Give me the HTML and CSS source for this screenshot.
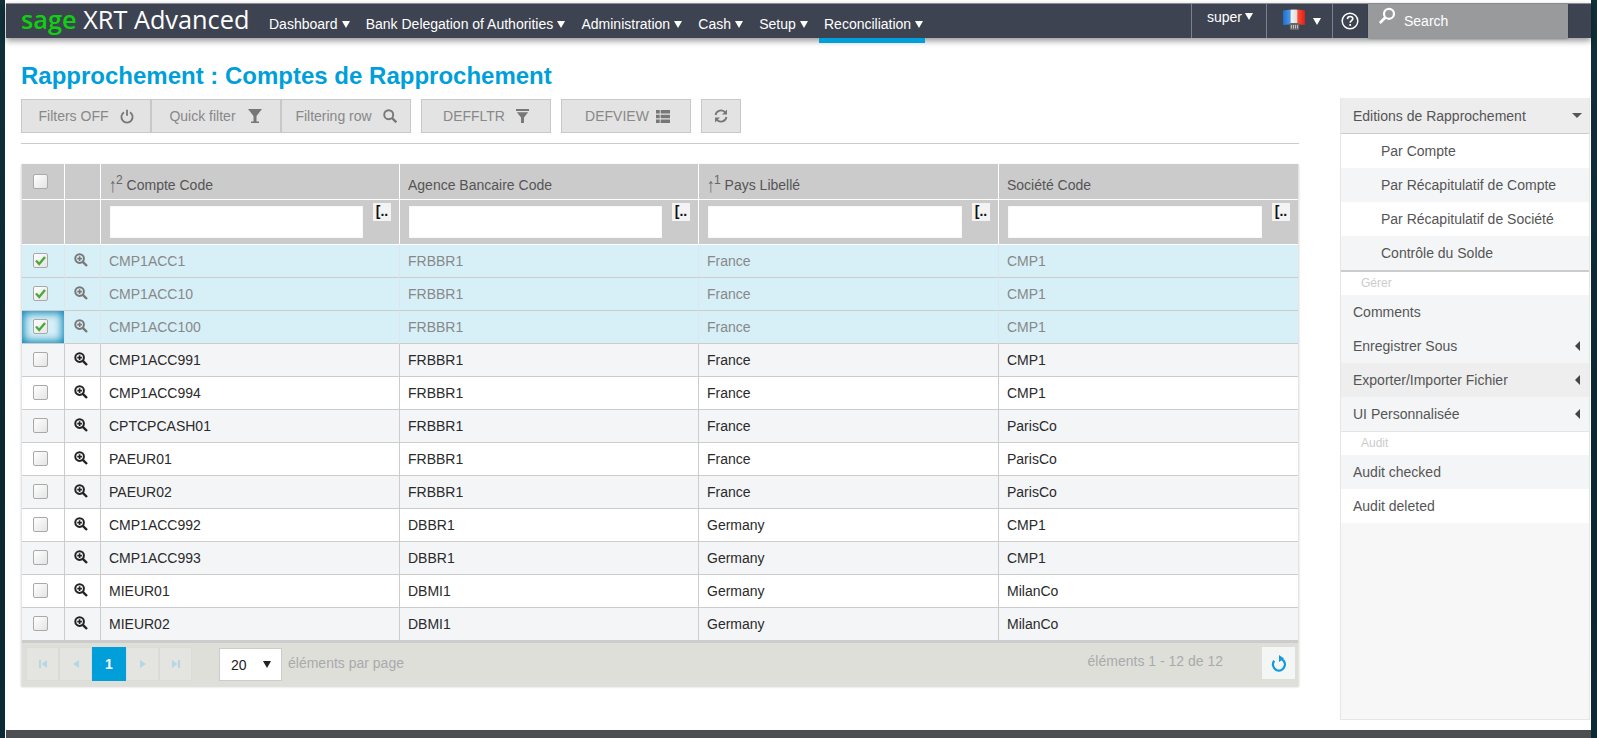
FILE: index.html
```html
<!DOCTYPE html>
<html lang="fr">
<head>
<meta charset="utf-8">
<title>Rapprochement : Comptes de Rapprochement</title>
<link rel="stylesheet" href="styles.css">
</head>
<body>
<svg class="defs" width="0" height="0" aria-hidden="true">
  <symbol id="i-zoom" viewBox="0 0 14 14"><circle cx="5.6" cy="5.6" r="4.3" fill="none" stroke="currentColor" stroke-width="2"/><path d="M8.8 8.8 13 13" stroke="currentColor" stroke-width="2.4" fill="none"/><path d="M3.3 5.6h4.6M5.6 3.3v4.6" stroke="currentColor" stroke-width="1.6"/></symbol>
  <symbol id="i-check" viewBox="0 0 15 15"><path d="M3 7.5 6.2 11 12 4" fill="none" stroke="#4aa83c" stroke-width="2.4"/></symbol>
  <symbol id="i-filter" viewBox="0 0 16 16"><path d="M1 1h14L9.5 8v5.5h2.5V15H4v-1.5h2.5V8z" fill="currentColor"/></symbol>
  <symbol id="i-first" viewBox="0 0 10 10"><path d="M1 1h2v8H1zM9 1v8L3.5 5z" fill="currentColor"/></symbol>
  <symbol id="i-prev" viewBox="0 0 10 10"><path d="M8 1v8L2 5z" fill="currentColor"/></symbol>
  <symbol id="i-next" viewBox="0 0 10 10"><path d="M2 1v8l6-4z" fill="currentColor"/></symbol>
  <symbol id="i-last" viewBox="0 0 10 10"><path d="M1 1v8l5.500-4zM7 1h2v8H7z" fill="currentColor"/></symbol>
</svg>
<div class="app">
  <header class="navbar">
    <div class="brand"><span class="brand-sage">sage</span> XRT Advanced</div>
    <nav class="menu">
      <a class="menu-item">Dashboard<i class="caret"></i></a>
      <a class="menu-item">Bank Delegation of Authorities<i class="caret"></i></a>
      <a class="menu-item">Administration<i class="caret"></i></a>
      <a class="menu-item">Cash<i class="caret"></i></a>
      <a class="menu-item">Setup<i class="caret"></i></a>
      <a class="menu-item active">Reconciliation<i class="caret"></i></a>
    </nav>
    <div class="nav-right">
      <div class="nav-cell user">super<i class="caret"></i></div>
      <div class="nav-cell lang">
        <svg class="flag" width="25" height="26" viewBox="0 0 24 26" preserveAspectRatio="none"><defs><linearGradient id="fl" x1="0" x2="1" y1="0" y2="0"><stop offset="0" stop-color="#1f6fd0"/><stop offset=".33" stop-color="#4b97e8"/><stop offset=".36" stop-color="#f4f4f4"/><stop offset=".64" stop-color="#dcdcdc"/><stop offset=".67" stop-color="#ff4a30"/><stop offset="1" stop-color="#e0201a"/></linearGradient></defs><path d="M1 2.500 Q12 .5 22 2.500V17Q12 15.500 1 17z" fill="url(#fl)"/><rect x="7.500" y="15" width="9" height="7" rx="1" fill="#666"/><path d="M9 17v3.500M11 17v3.500M13 17v3.500M15 17v3.500" stroke="#ddd" stroke-width=".8"/></svg>
        <i class="caret"></i>
      </div>
      <div class="nav-cell help">
        <svg width="18" height="18" viewBox="0 0 18 18"><circle cx="9" cy="9" r="7.800" fill="none" stroke="#fff" stroke-width="1.500"/><path d="M6.400 7.100C6.500 5.300 7.700 4.500 9.100 4.500 10.700 4.500 11.800 5.500 11.800 6.800 11.800 8.700 9.200 8.800 9.200 10.800" fill="none" stroke="#fff" stroke-width="1.600"/><rect x="8.300" y="12" width="1.800" height="1.900" fill="#fff"/></svg>
      </div>
      <div class="search">
        <svg width="18" height="18" viewBox="0 0 18 18"><circle cx="11" cy="6.800" r="5" fill="none" stroke="#fff" stroke-width="2.200"/><path d="M7.300 10.500 1.800 16" stroke="#fff" stroke-width="2.600"/></svg>
        <span>Search</span>
      </div>
    </div>
  </header>
  <div class="main">
    <section class="content">
      <h1 class="title">Rapprochement : Comptes de Rapprochement</h1>
      <div class="toolbar">
        <div class="btn-group">
          <button class="btn wide">Filters OFF
            <svg width="14" height="15" viewBox="0 0 14 15"><path d="M4 3.200a5.600 5.600 0 1 0 6 0" fill="none" stroke="currentColor" stroke-width="1.800"/><path d="M7 .8v6" stroke="currentColor" stroke-width="1.800"/></svg>
          </button>
          <button class="btn wide">Quick filter <svg width="16" height="16"><use href="#i-filter"/></svg></button>
          <button class="btn wide">Filtering row
            <svg width="14" height="14" viewBox="0 0 14 14"><circle cx="5.700" cy="5.700" r="4.500" fill="none" stroke="currentColor" stroke-width="1.900"/><path d="M9 9l4.300 4.300" stroke="currentColor" stroke-width="2.400"/></svg>
          </button>
        </div>
        <button class="btn wide">DEFFLTR <svg width="13" height="15" viewBox="0 0 16 16" preserveAspectRatio="none"><path d="M0 0h16v2H0zM1 3.500h14L9.800 9v6H6.200V9z" fill="currentColor"/></svg></button>
        <button class="btn wide tight">DEFVIEW
          <svg width="14" height="13" viewBox="0 0 15 13" preserveAspectRatio="none"><path d="M0 0h4v3.500H0zM5 0h10v3.500H5zM0 4.700h4v3.500H0zM5 4.700h10v3.500H5zM0 9.400h4V13H0zM5 9.400h10V13H5z" fill="currentColor"/></svg>
        </button>
        <button class="btn narrow" aria-label="Refresh">
          <svg width="14" height="14" viewBox="0 0 14 14"><path d="M1.500 6A5.600 5.600 0 0 1 11.400 3.500M12.500 8A5.600 5.600 0 0 1 2.600 10.500" fill="none" stroke="currentColor" stroke-width="1.800"/><path d="M13 .5v5H8zM1 13.500v-5h5z" fill="currentColor"/></svg>
        </button>
      </div>
      <hr class="rule">
      <div class="grid">
        <table class="grid-table">
          <colgroup><col class="c-check"><col class="c-view"><col class="c-a"><col class="c-a"><col class="c-b"><col></colgroup>
          <thead>
            <tr class="head-row">
              <th class="center check"><span class="cb"></span></th>
              <th></th>
              <th><span class="sort"><span class="arrow">↑</span><sup>2</sup></span> Compte Code</th>
              <th>Agence Bancaire Code</th>
              <th><span class="sort"><span class="arrow">↑</span><sup>1</sup></span> Pays Libellé</th>
              <th>Société Code</th>
            </tr>
            <tr class="filter-row">
              <th></th>
              <th></th>
              <th><div class="filter"><input class="filter-input" type="text"><span class="filter-btn">[..</span></div></th>
              <th><div class="filter"><input class="filter-input" type="text"><span class="filter-btn">[..</span></div></th>
              <th><div class="filter"><input class="filter-input" type="text"><span class="filter-btn">[..</span></div></th>
              <th><div class="filter"><input class="filter-input" type="text"><span class="filter-btn">[..</span></div></th>
            </tr>
          </thead>
          <tbody>
            <tr class="sel"><td class="center check"><span class="cb"><svg width="15" height="15"><use href="#i-check"/></svg></span></td><td class="center view"><svg class="zoom" width="14" height="14"><use href="#i-zoom"/></svg></td><td>CMP1ACC1</td><td>FRBBR1</td><td>France</td><td>CMP1</td></tr>
            <tr class="sel"><td class="center check"><span class="cb"><svg width="15" height="15"><use href="#i-check"/></svg></span></td><td class="center view"><svg class="zoom" width="14" height="14"><use href="#i-zoom"/></svg></td><td>CMP1ACC10</td><td>FRBBR1</td><td>France</td><td>CMP1</td></tr>
            <tr class="sel"><td class="center check focus"><span class="cb"><svg width="15" height="15"><use href="#i-check"/></svg></span></td><td class="center view"><svg class="zoom" width="14" height="14"><use href="#i-zoom"/></svg></td><td>CMP1ACC100</td><td>FRBBR1</td><td>France</td><td>CMP1</td></tr>
            <tr class="alt"><td class="center check"><span class="cb"></span></td><td class="center view"><svg class="zoom" width="14" height="14"><use href="#i-zoom"/></svg></td><td>CMP1ACC991</td><td>FRBBR1</td><td>France</td><td>CMP1</td></tr>
            <tr><td class="center check"><span class="cb"></span></td><td class="center view"><svg class="zoom" width="14" height="14"><use href="#i-zoom"/></svg></td><td>CMP1ACC994</td><td>FRBBR1</td><td>France</td><td>CMP1</td></tr>
            <tr class="alt"><td class="center check"><span class="cb"></span></td><td class="center view"><svg class="zoom" width="14" height="14"><use href="#i-zoom"/></svg></td><td>CPTCPCASH01</td><td>FRBBR1</td><td>France</td><td>ParisCo</td></tr>
            <tr><td class="center check"><span class="cb"></span></td><td class="center view"><svg class="zoom" width="14" height="14"><use href="#i-zoom"/></svg></td><td>PAEUR01</td><td>FRBBR1</td><td>France</td><td>ParisCo</td></tr>
            <tr class="alt"><td class="center check"><span class="cb"></span></td><td class="center view"><svg class="zoom" width="14" height="14"><use href="#i-zoom"/></svg></td><td>PAEUR02</td><td>FRBBR1</td><td>France</td><td>ParisCo</td></tr>
            <tr><td class="center check"><span class="cb"></span></td><td class="center view"><svg class="zoom" width="14" height="14"><use href="#i-zoom"/></svg></td><td>CMP1ACC992</td><td>DBBR1</td><td>Germany</td><td>CMP1</td></tr>
            <tr class="alt"><td class="center check"><span class="cb"></span></td><td class="center view"><svg class="zoom" width="14" height="14"><use href="#i-zoom"/></svg></td><td>CMP1ACC993</td><td>DBBR1</td><td>Germany</td><td>CMP1</td></tr>
            <tr><td class="center check"><span class="cb"></span></td><td class="center view"><svg class="zoom" width="14" height="14"><use href="#i-zoom"/></svg></td><td>MIEUR01</td><td>DBMI1</td><td>Germany</td><td>MilanCo</td></tr>
            <tr class="alt"><td class="center check"><span class="cb"></span></td><td class="center view"><svg class="zoom" width="14" height="14"><use href="#i-zoom"/></svg></td><td>MIEUR02</td><td>DBMI1</td><td>Germany</td><td>MilanCo</td></tr>
          </tbody>
        </table>
        <div class="pager">
          <div class="pages">
            <span class="page"><svg width="10" height="10"><use href="#i-first"/></svg></span>
            <span class="page"><svg width="10" height="10"><use href="#i-prev"/></svg></span>
            <span class="page current">1</span>
            <span class="page"><svg width="10" height="10"><use href="#i-next"/></svg></span>
            <span class="page"><svg width="10" height="10"><use href="#i-last"/></svg></span>
          </div>
          <div class="size">20<i class="caret dark"></i></div>
          <span class="muted">éléments par page</span>
          <span class="muted info">éléments 1 - 12 de 12</span>
          <span class="reload">
            <svg width="16" height="18" viewBox="0 0 16 18"><path d="M8 4.500A6 6 0 1 1 3.200 6.800" fill="none" stroke="#0f9bdc" stroke-width="2.200"/><path d="M8 1v7l5-3.500z" fill="#0f9bdc"/></svg>
          </span>
        </div>
      </div>
    </section>
    <aside class="side">
      <div class="side-head">Editions de Rapprochement<i class="caret gray"></i></div>
      <div class="side-sub">
        <div class="side-item sub">Par Compte</div>
        <div class="side-item sub alt">Par Récapitulatif de Compte</div>
        <div class="side-item sub">Par Récapitulatif de Société</div>
        <div class="side-item sub alt">Contrôle du Solde</div>
      </div>
      <div class="side-label">Gérer</div>
      <div class="side-item alt">Comments</div>
      <div class="side-item alt">Enregistrer Sous<i class="left"></i></div>
      <div class="side-item hover">Exporter/Importer Fichier<i class="left"></i></div>
      <div class="side-item alt">UI Personnalisée<i class="left"></i></div>
      <div class="side-label ruled">Audit</div>
      <div class="side-item alt">Audit checked</div>
      <div class="side-item">Audit deleted</div>
    </aside>
  </div>
  <footer class="footer"></footer>
</div>
</body>
</html>
```
FILE: styles.css
```css
* { box-sizing: border-box; }
html, body { margin: 0; height: 100%; }
body {
  background: linear-gradient(180deg, #10303a, #0b2730 60%, #0c2a33);
  font-family: "Liberation Sans", Arial, sans-serif;
  font-size: 14px;
  color: #333;
  overflow: hidden;
}
.defs { position: absolute; }
.app {
  margin: 0 6px 0 5px;
  width: 1586px;
  height: 738px;
  background: #fff;
  border-left: 1px solid #fff;
  border-top: 3px solid #fff;
  display: flex;
  flex-direction: column;
}
.navbar {
  height: 35px;
  flex: none;
  background: #3d4351;
  border-top: 1px solid #8a8d94;
  color: #fff;
  display: flex;
  box-shadow: 0 3px 6px rgba(0,0,0,.4);
  position: relative;
  z-index: 2;
}
.brand {
  font-family: "Open Sans", sans-serif;
  font-size: 25.3px;
  line-height: 30px;
  padding-left: 15px;
  width: 258px;
  white-space: nowrap;
  flex: none;
}
.brand-sage { color: #0fd00f; font-weight: 600; }
.menu { display: flex; gap: 9.2px; align-items: center; height: 100%; }
.menu-item {
  position: relative;
  height: 100%;
  padding: 9px 2px 0 5px;
  line-height: 23px;
  display: block;
  white-space: nowrap;
}
.menu-item.active::after {
  content: "";
  position: absolute;
  left: 0; right: 0;
  top: 34px;
  height: 5px;
  background: #009fda;
}
.caret {
  display: inline-block;
  width: 0; height: 0;
  margin-left: 4px;
  border-left: 4px solid transparent;
  border-right: 4px solid transparent;
  border-top: 7px solid #fff;
  vertical-align: 1px;
}
.caret.dark { border-top-color: #222; margin-left: 0; }
.caret.gray { border-top-color: #555; border-top-width: 5px; border-left-width: 5px; border-right-width: 5px; margin: 0; }
.nav-right { display: flex; margin-left: auto; height: 100%; }
.nav-cell {
  border-left: 1px solid #7c808a;
  height: 100%;
  display: flex;
  align-items: center;
}
.user { width: 75px; padding: 0 0 9px 15px; white-space: nowrap; }
.user .caret { margin-left: 3px; }
.lang { width: 66px; padding-left: 15px; }
.lang .caret { margin-left: 6px; }
.help { width: 36px; justify-content: center; padding-right: 2px; }
.search {
  width: 200px;
  margin-right: 23px;
  background: #999a9c;
  display: flex;
  padding: 3px 0 0 10px;
  color: #fff;
  gap: 8px;
  box-shadow: 0 1px 2px rgba(0,0,0,.2);
}
.search span { line-height: 26px; padding-top: 1px; }
.main { flex: 1; display: flex; min-height: 0; }
.content { width: 1293px; flex: none; padding-left: 15px; }
.title {
  margin: 0;
  padding-top: 23px;
  font-size: 24px;
  font-weight: 700;
  line-height: 30px;
  color: #009fda;
}
.toolbar { display: flex; gap: 10px; margin-top: 8px; height: 34px; }
.btn-group { display: flex; }
.btn {
  height: 34px;
  background: #e3e3e3;
  border: 1px solid #c8c8c8;
  color: #888;
  font: 14px "Liberation Sans", Arial, sans-serif;
  display: flex;
  align-items: center;
  justify-content: center;
  gap: 11px;
  padding: 0;
}
.btn svg { color: #777; }
.btn.wide { width: 130px; }
.btn.tight { gap: 7px; padding-left: 3px; }
.btn.narrow { width: 40px; }
.rule { border: 0; border-top: 1px solid #ccc; margin: 10px 0 20px; height: 0; width: 1278px; }
.grid {
  width: 1278px;
  border-left: 1px solid #e4e4e4;
  border-right: 1px solid #e4e4e4;
  box-shadow: 0 1px 2px rgba(0,0,0,.18);
}
.grid-table { width: 1276px; table-layout: fixed; border-collapse: separate; border-spacing: 0; }
.c-check { width: 43px; }
.c-view { width: 36px; }
.c-a { width: 299px; }
.c-b { width: 300px; }
th { background: #cbcbcb; color: #555; font-weight: 400; text-align: left; padding: 0 8px; border-right: 1px solid #fff; border-bottom: 1px solid #fff; }
th:last-child, td:last-child { border-right: 0; }
.head-row th { height: 36px; padding-top: 7px; }
.head-row th.center { padding-top: 0; padding-bottom: 1px; }
.sort { color: #666; }
.arrow { display: inline-block; transform: scale(1.1, 1.45); transform-origin: 50% 60%; }
sup { font-size: 12px; line-height: 0; }
.filter-row th { height: 45px; padding: 0 8px 0 9px; vertical-align: top; }
.filter { display: flex; align-items: flex-start; gap: 10px; padding-top: 3px; }
.filter-input { flex: 1; min-width: 0; height: 32px; margin-top: 3px; border: 0; background: #fff; box-shadow: inset 0 0 2px #e8e8e8; }
.filter-btn {
  flex: none;
  width: 18px;
  height: 18px;
  background: #f3f3f3;
  color: #111;
  font: 700 14px/16px "Liberation Sans", Arial, sans-serif;
  text-align: center;
}
td {
  height: 33px;
  padding: 0 8px;
  color: #2a2a2a;
  background: #fff;
  border-right: 1px solid #ccc;
  border-bottom: 1px solid #ccc;
  white-space: nowrap;
}
.alt td { background: #f4f5f7; }
.sel td { background: #d7f0f8; color: #888; border-right-color: #dfe5e8; }
.center { text-align: center; padding: 0; }
td.check { padding: 0 6px 3px 0; }
td.view { padding: 1px 4px 0 0; }
th.check { padding-right: 6px; }
.focus { box-shadow: inset 0 0 9px 2px #0b86b6; }
.cb {
  display: inline-block;
  width: 15px;
  height: 15px;
  border: 1px solid #a9a9a9;
  border-radius: 2px;
  background: linear-gradient(135deg, #fff, #e4e4e4);
  vertical-align: middle;
  position: relative;
}
.cb svg { display: block; margin: -1px; }
.zoom { color: #222; display: inline-block; vertical-align: middle; margin-bottom: 3px; }
.sel .zoom { color: #777; }
.pager {
  height: 45px;
  background: #dfdfda;
  border-top: 2px solid #ccc;
  display: flex;
  align-items: flex-start;
  padding: 4px 3px 0 4px;
  color: #aaa;
}
.pages { display: flex; width: 166px; flex: none; }
.page {
  width: 33px;
  height: 34px;
  flex: none;
  background: #e4e5e0;
  border: 1px solid #dbdcd6;
  color: #b5d7e4;
  display: flex;
  align-items: center;
  justify-content: center;
}
.page.current { width: 34px; background: #009fda; border-color: #009fda; color: #fff; font-weight: 700; }
.size {
  width: 63px;
  height: 33px;
  margin: 1px 0 0 27px;
  background: #fff;
  border: 1px solid #ccc;
  color: #222;
  display: flex;
  align-items: center;
  justify-content: space-between;
  padding: 0 10px 0 11px;
}
.muted { line-height: 32px; margin-left: 6px; white-space: nowrap; }
.info { margin-left: auto; margin-right: 39px; line-height: 29px; }
.reload {
  width: 33px;
  height: 32px;
  background: #f4f5f5;
  display: flex;
  align-items: center;
  justify-content: center;
}
.side {
  width: 250px;
  height: 622px;
  margin: 60px 0 0 41px;
  flex: none;
  background: #f7f7f7;
  border: 1px solid #e6e6e6;
  border-width: 0 1px 1px 1px;
  color: #555;
}
.side-head {
  height: 36px;
  background: #ededed;
  border-bottom: 1px solid #ccc;
  display: flex;
  align-items: center;
  justify-content: space-between;
  padding: 0 7px 0 12px;
}
.side-sub { border-bottom: 2px solid #ccc; }
.side-item {
  height: 34px;
  background: #fff;
  display: flex;
  align-items: center;
  justify-content: space-between;
  padding: 0 9px 0 12px;
}
.side-item.sub { padding-left: 40px; }
.side-item.alt { background: #f4f5f7; }
.side-item.hover { background: #eeeeee; }
.side-label {
  height: 23px;
  background: #fff;
  font-size: 12px;
  color: #ccc;
  padding: 4px 0 0 20px;
}
.side-label.ruled { border-top: 1px solid #e4e4e4; height: 24px; }
.left {
  width: 0; height: 0;
  border-top: 5px solid transparent;
  border-bottom: 5px solid transparent;
  border-right: 5px solid #444;
}
.footer { height: 8px; flex: none; background: #4c4e52; }
```
